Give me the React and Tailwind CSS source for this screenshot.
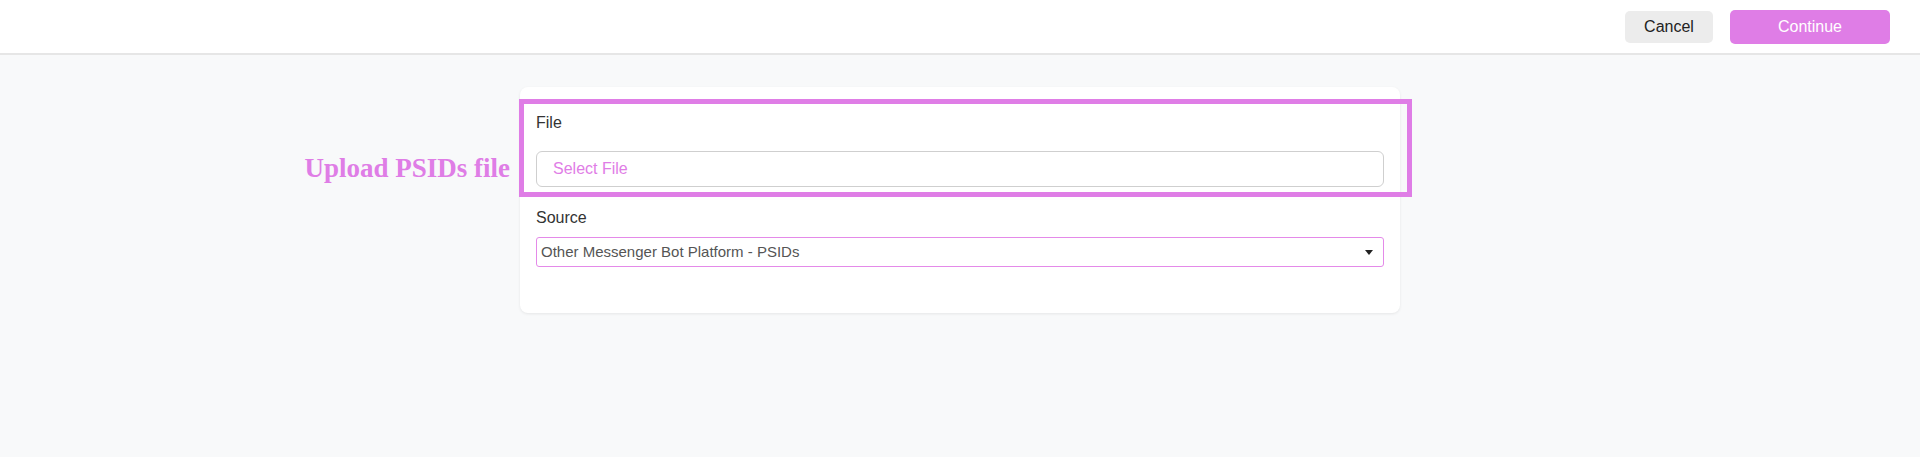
import React from 'react';

const App = () => {
  return (
    <div className="min-h-[457px] bg-[#f8f9fa] font-['Liberation_Sans',Arial,sans-serif]">
      {/* Top bar */}
      <div className="flex h-[55px] items-center justify-end gap-[17px] border-b-2 border-[#e6e6e6] bg-white pr-[30px]">
        <button className="h-8 w-[88px] rounded-[5px] bg-[#ececec] text-[16px] text-[#222]">
          Cancel
        </button>
        <button className="h-[34px] w-[160px] rounded-[5px] bg-[#df7de6] text-[16px] text-white">
          Continue
        </button>
      </div>

      {/* Card */}
      <div className="flex justify-center pt-[32px]">
        <div className="relative w-[880px] rounded-lg bg-white px-4 pt-6 pb-[46px] shadow-[0_1px_3px_rgba(0,0,0,0.08)]">
          {/* annotation overlay */}
          <div className="pointer-events-none absolute top-[12px] left-[-1px] h-[98px] w-[893px] border-[5px] border-[#df7de6]" />
          <div className="pointer-events-none absolute top-[61px] right-[calc(100%+10px)] whitespace-nowrap font-['Liberation_Serif',serif] text-[27px] font-bold text-[#df7de6]">
            Upload PSIDs file
          </div>

          <label className="block text-[16px] leading-6 text-[#333]">File</label>
          <div className="mt-4 flex h-9 items-center rounded-md border border-[#cfcfcf] px-4 text-[16px] text-[#df7de6]">
            Select File
          </div>

          <label className="mt-[19px] block text-[16px] leading-6 text-[#333]">Source</label>
          <div className="mt-[7px] flex h-[30px] items-center justify-between rounded-[3px] border border-[#e48ae9] pr-[10px] pl-[4px] text-[15px] text-[#555]">
            <span>Other Messenger Bot Platform - PSIDs</span>
            <svg width="8" height="5" viewBox="0 0 8 5">
              <path d="M0 0h8L4 5z" fill="#222" />
            </svg>
          </div>
        </div>
      </div>
    </div>
  );
};

export default App;
